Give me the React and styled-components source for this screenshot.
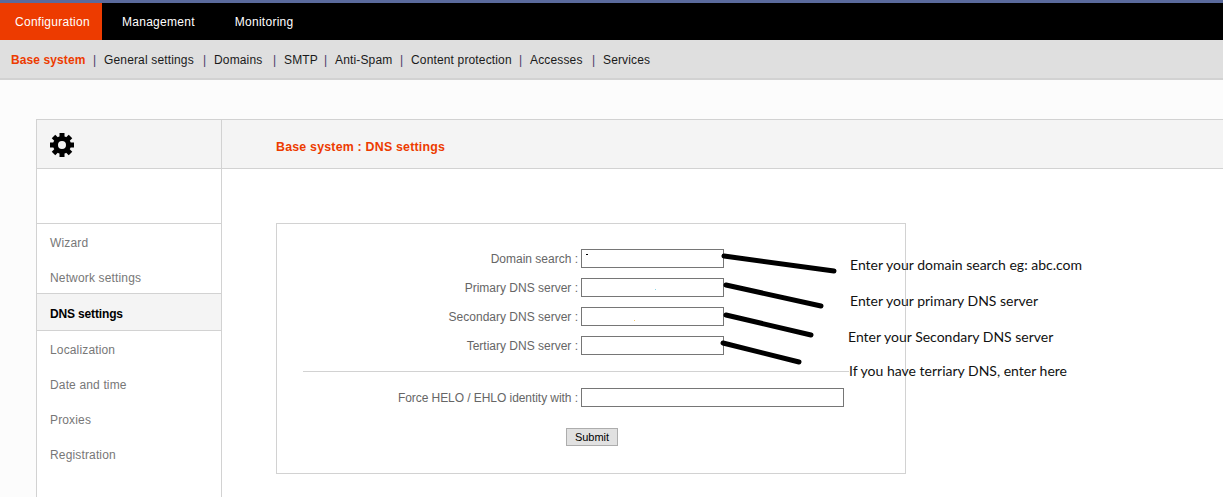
import React from 'react'
import styled, { createGlobalStyle } from 'styled-components'

const mainTabs = ['Configuration', 'Management', 'Monitoring']
const subLinks = [
  { label: 'Base system', width: 74 },
  { label: 'General settings', width: 91 },
  { label: 'Domains', width: 51 },
  { label: 'SMTP', width: 32 },
  { label: 'Anti-Spam', width: 57 },
  { label: 'Content protection', width: 100 },
  { label: 'Accesses', width: 54 },
  { label: 'Services', width: 47 },
]
const sideLinks = ['Wizard', 'Network settings', 'DNS settings', 'Localization', 'Date and time', 'Proxies', 'Registration']
const dnsFields = ['Domain search :', 'Primary DNS server :', 'Secondary DNS server :', 'Tertiary DNS server :']

const notes = [
  { text: 'Enter your domain search eg: abc.com', x: 850, y: 256 },
  { text: 'Enter your primary DNS server', x: 850, y: 292 },
  { text: 'Enter your Secondary DNS server', x: 848, y: 328 },
  { text: 'If you have terriary DNS, enter here', x: 849, y: 362 },
]

const strokes = [
  [724, 256, 834, 271],
  [726, 285, 821, 306],
  [726, 315, 811, 335],
  [723, 343, 799, 362],
]

const gearTeeth = [0, 45, 90, 135, 180, 225, 270, 315]

const GearIcon = () => (
  <svg width="24" height="24" viewBox="0 0 24 24">
    <circle cx="12" cy="12" r="6.5" fill="none" stroke="#000" strokeWidth="5" />
    {gearTeeth.map((angle) => (
      <rect key={angle} x="9.5" y="0" width="5" height="6" fill="#000" transform={`rotate(${angle} 12 12)`} />
    ))}
  </svg>
)

const App = () => {
  return (
    <Page>
      <GlobalStyle />
      <TopBar>
        {mainTabs.map((tab, i) => (
          <MainTab key={tab} $active={i === 0}>{tab}</MainTab>
        ))}
      </TopBar>
      <SubBar>
        {subLinks.map((link, i) => (
          <React.Fragment key={link.label}>
            {i > 0 && <Pipe>|</Pipe>}
            <SubLink $active={i === 0} $width={link.width}>{link.label}</SubLink>
          </React.Fragment>
        ))}
      </SubBar>
      <Panel>
        <PanelHead>
          <IconCell><GearIcon /></IconCell>
          <TitleCell>Base system : DNS settings</TitleCell>
        </PanelHead>
        <PanelBody>
          <Sidebar>
            <SideGap />
            <SideList>
              {sideLinks.map((link) => (
                <SideItem key={link} $active={link === 'DNS settings'}>{link}</SideItem>
              ))}
            </SideList>
          </Sidebar>
          <Content>
            <FormBox>
              <FieldGrid>
                {dnsFields.map((label, i) => (
                  <React.Fragment key={label}>
                    <FieldLabel>{label}</FieldLabel>
                    <FieldWrap>
                      <TextInput type="text" />
                      {i === 0 && <Speck $x={5} $y={5} $w={2} $color="#000" />}
                      {i === 1 && <Speck $x={74} $y={11} $w={1} $color="#8fd8e8" />}
                      {i === 2 && <Speck $x={53} $y={13} $w={1} $color="#f5c96a" />}
                    </FieldWrap>
                  </React.Fragment>
                ))}
              </FieldGrid>
              <Rule />
              <FieldGrid>
                <FieldLabel $tight>Force HELO / EHLO identity with :</FieldLabel>
                <TextInput type="text" $wide />
              </FieldGrid>
              <SubmitRow>
                <SubmitButton type="button">Submit</SubmitButton>
              </SubmitRow>
            </FormBox>
          </Content>
        </PanelBody>
      </Panel>

      {/* hand-drawn callouts pasted on top of the form */}
      <Callouts width="1223" height="497">
        {strokes.map(([x1, y1, x2, y2]) => (
          <line key={x1 + '-' + y1} x1={x1} y1={y1} x2={x2} y2={y2} stroke="#000" strokeWidth="5" strokeLinecap="round" />
        ))}
      </Callouts>
      {notes.map((note) => (
        <Note key={note.text} $x={note.x} $y={note.y}>{note.text}</Note>
      ))}
    </Page>
  )
}

const GlobalStyle = createGlobalStyle`
  html, body {
    margin: 0;
    padding: 0;
    background: #fcfcfc;
  }
  body {
    font-family: "Liberation Sans", Arial, sans-serif;
    font-size: 12px;
  }
`

const Page = styled.div`
  position: relative;
  width: 1223px;
  height: 497px;
  overflow: hidden;
  display: flex;
  flex-direction: column;
`

const TopBar = styled.nav`
  display: flex;
  height: 37px;
  background: #000;
  border-top: 3px solid #5a6a9c;
`

const MainTab = styled.a`
  display: flex;
  align-items: center;
  box-sizing: border-box;
  width: ${(p) => (p.$active ? '102px' : 'auto')};
  padding: ${(p) => (p.$active ? '0 0 0 15px' : '0 20px')};
  background: ${(p) => (p.$active ? '#ed3b00' : 'transparent')};
  color: #fff;
  font-size: 12px;
  letter-spacing: 0.27px;
`

const SubBar = styled.nav`
  display: flex;
  align-items: center;
  height: 37px;
  padding: 1px 0 0 11px;
  background: #dfdfdf;
  border-bottom: 2px solid #d2d2d2;
  font-size: 12px;
`

const SubLink = styled.a`
  width: ${(p) => p.$width}px;
  white-space: nowrap;
  color: ${(p) => (p.$active ? '#ed3b00' : '#1a1a1a')};
  font-weight: ${(p) => (p.$active ? 'bold' : 'normal')};
  letter-spacing: ${(p) => (p.$active ? '0.1px' : '0.15px')};
`

const Pipe = styled.span`
  width: 19px;
  text-align: center;
  color: #4a3a6a;
`

const Panel = styled.div`
  flex: 1;
  margin: 39px 0 0 36px;
  display: flex;
  flex-direction: column;
  border-top: 1px solid #d2d2d2;
  border-left: 1px solid #d2d2d2;
  background: #fff;
`

const PanelHead = styled.div`
  display: flex;
  height: 48px;
  background: #f4f4f4;
  border-bottom: 1px solid #d2d2d2;
`

const IconCell = styled.div`
  width: 185px;
  display: flex;
  align-items: center;
  padding: 2px 0 0 13px;
  box-sizing: border-box;
  border-right: 1px solid #d2d2d2;
`

const TitleCell = styled.h1`
  margin: 0;
  padding-left: 54px;
  line-height: 55px;
  color: #ed3b00;
  font-size: 12.4px;
  font-weight: bold;
  letter-spacing: 0.2px;
`

const PanelBody = styled.div`
  flex: 1;
  display: flex;
`

const Sidebar = styled.aside`
  width: 185px;
  box-sizing: border-box;
  border-right: 1px solid #d2d2d2;
`

const SideGap = styled.div`
  height: 54px;
  border-bottom: 1px solid #d2d2d2;
`

const SideList = styled.ul`
  list-style: none;
  margin: 0;
  padding: 0;
`

const SideItem = styled.li`
  height: ${(p) => (p.$active ? '36px' : '35px')};
  line-height: ${(p) => (p.$active ? '40px' : '38px')};
  padding-left: 13px;
  color: ${(p) => (p.$active ? '#000' : '#777')};
  font-weight: ${(p) => (p.$active ? 'bold' : 'normal')};
  letter-spacing: ${(p) => (p.$active ? '-0.15px' : '0.15px')};
  background: ${(p) => (p.$active ? '#f4f4f4' : 'transparent')};
  ${(p) => p.$active && 'border-top: 1px solid #d2d2d2; border-bottom: 1px solid #d2d2d2; margin-top: -1px; position: relative;'}
`

const Content = styled.main`
  flex: 1;
  padding: 54px 0 0 54px;
`

const FormBox = styled.form`
  width: 630px;
  height: 251px;
  box-sizing: border-box;
  padding: 25px 26px 0;
  background: #fff;
  border: 1px solid #d2d2d2;
`

const FieldGrid = styled.div`
  display: grid;
  grid-template-columns: 275px auto;
  justify-content: start;
  column-gap: 3px;
  row-gap: 10px;
  align-items: center;
`

const FieldLabel = styled.label`
  text-align: right;
  color: #666;
  font-size: 12px;
  white-space: nowrap;
  letter-spacing: ${(p) => (p.$tight ? '-0.06px' : '0')};
`

const FieldWrap = styled.div`
  position: relative;
  width: 143px;
  height: 19px;
`

const TextInput = styled.input`
  display: block;
  box-sizing: border-box;
  width: ${(p) => (p.$wide ? '263px' : '143px')};
  height: 19px;
  margin: 0;
  padding: 0 2px;
  background: #fff;
  border: 1px solid #767676;
  border-radius: 0;
  outline: none;
`

const Speck = styled.span`
  position: absolute;
  left: ${(p) => p.$x}px;
  top: ${(p) => p.$y}px;
  width: ${(p) => p.$w}px;
  height: 1px;
  background: ${(p) => p.$color};
`

const Rule = styled.hr`
  width: 546px;
  height: 1px;
  margin: 16px 0 16px;
  border: 0;
  background: #d2d2d2;
`

const SubmitRow = styled.div`
  display: flex;
  margin-top: 21px;
  padding-left: 263px;
`

const SubmitButton = styled.button`
  width: 52px;
  height: 18px;
  padding: 0;
  background: #e1e1e1;
  border: 1px solid #adadad;
  border-radius: 0;
  color: #000;
  font-family: "Liberation Sans", Arial, sans-serif;
  font-size: 11px;
`

const Callouts = styled.svg`
  position: absolute;
  left: 0;
  top: 0;
  pointer-events: none;
`

const Note = styled.span`
  position: absolute;
  left: ${(p) => p.$x}px;
  top: ${(p) => p.$y}px;
  font-family: Lato, "Open Sans", sans-serif;
  font-size: 14px;
  line-height: 18px;
  color: #111;
  white-space: nowrap;
`

export default App
